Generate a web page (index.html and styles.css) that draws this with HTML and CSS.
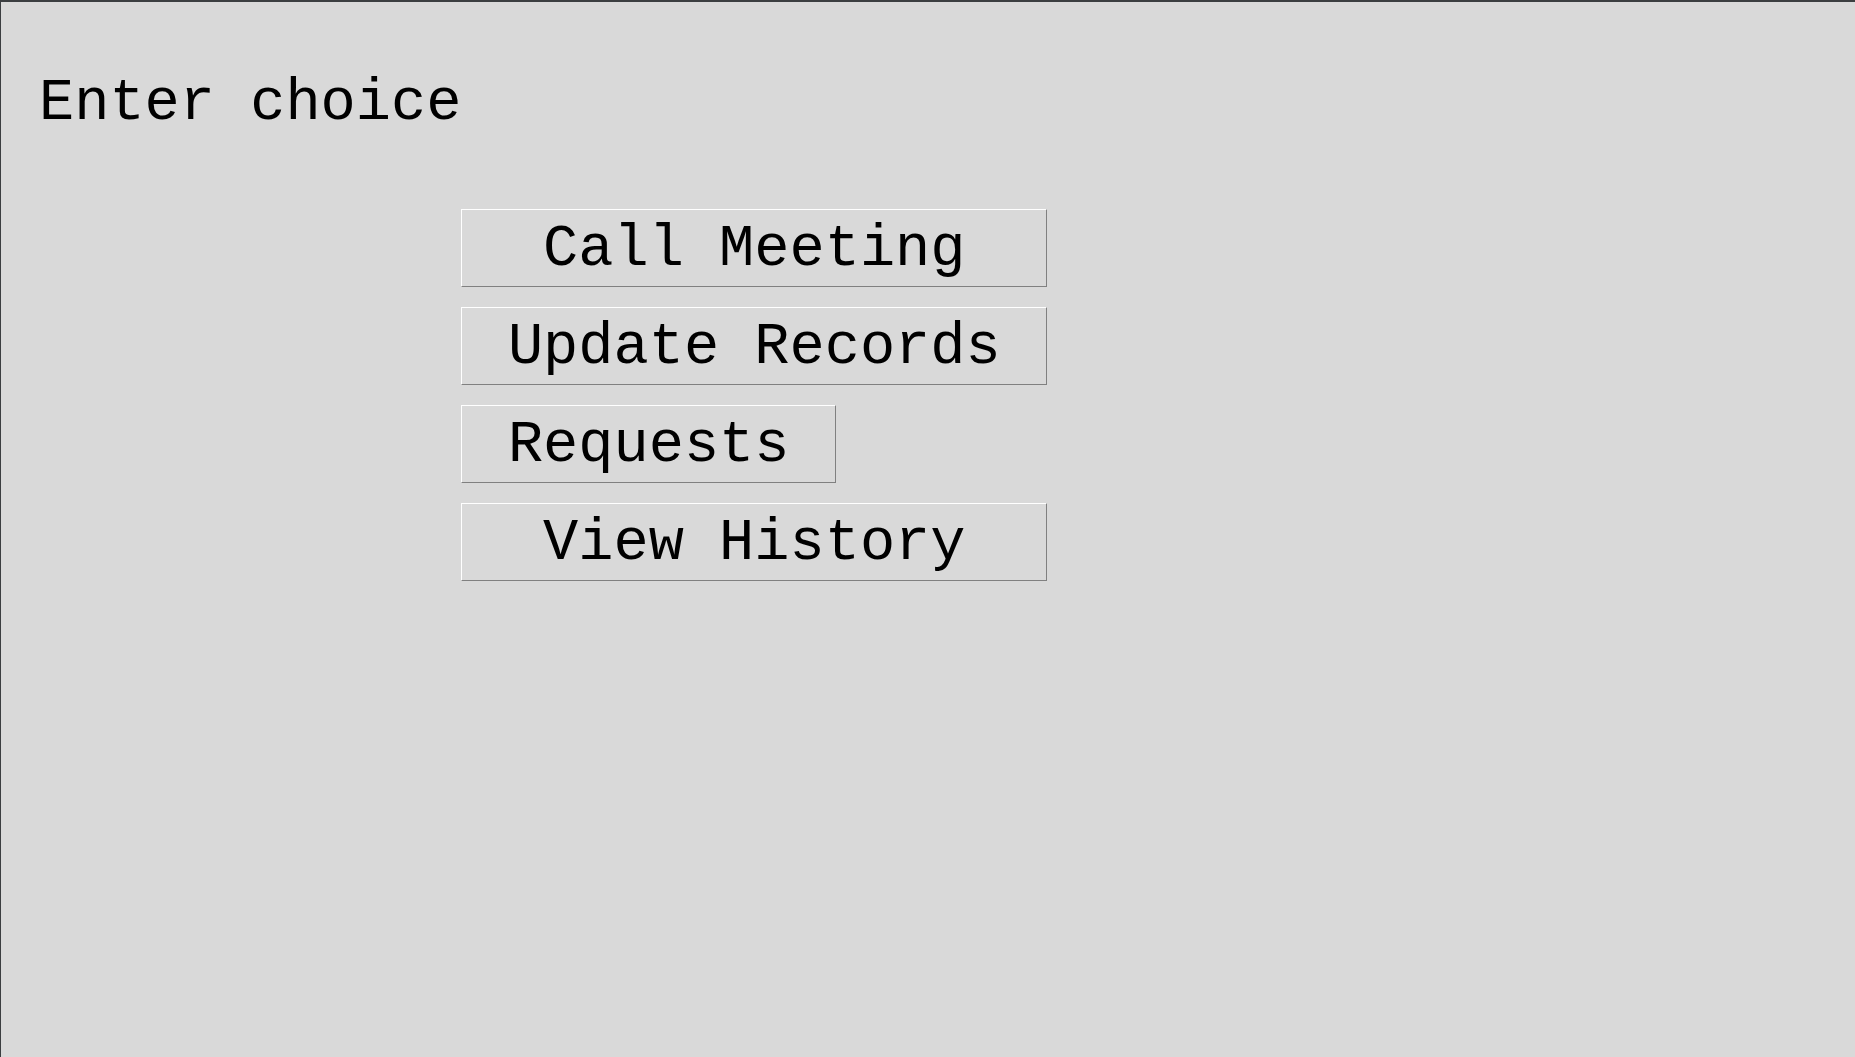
FILE: index.html
```html
<!DOCTYPE html>
<html lang="en">
<head>
<meta charset="utf-8">
<title>Enter choice</title>
<link rel="stylesheet" href="styles.css">
</head>
<body>
<div class="window">
  <div class="menu">
    <div class="prompt">Enter choice</div>
    <button class="btn wide row-1">Call Meeting</button>
    <button class="btn wide row-2">Update Records</button>
    <button class="btn row-3">Requests</button>
    <button class="btn wide row-4">View History</button>
  </div>
</div>
</body>
</html>
```
FILE: styles.css
```css
html, body {
  margin: 0;
  padding: 0;
  background: #d9d9d9;
}
body {
  height: 100vh;
  box-sizing: border-box;
  border-top: 2px solid #3b3e40;
  border-left: 1px solid #3b3e40;
  overflow: hidden;
}
.window {
  padding: 68px 0 0 38px;
}
.menu {
  display: grid;
  grid-template-columns: auto auto;
  row-gap: 20px;
  justify-content: start;
  align-items: start;
}
.prompt {
  grid-column: 1;
  grid-row: 1;
  font-family: "Courier New", "Nimbus Mono PS", "FreeMono", "Liberation Mono", monospace;
  font-size: 58.67px;
  line-height: 67px;
  color: #000;
  white-space: pre;
  margin-bottom: 52px;
}
.btn {
  grid-column: 2;
  justify-self: start;
  font-family: "Courier New", "Nimbus Mono PS", "FreeMono", "Liberation Mono", monospace;
  font-size: 58.67px;
  line-height: 67px;
  color: #000;
  background: #d9d9d9;
  margin: 0;
  padding: 6px 45.5px 3px;
  border: 1px solid;
  border-color: #ffffff #808080 #808080 #ffffff;
  border-radius: 0;
  white-space: pre;
  text-align: center;
  cursor: default;
}
.btn.wide {
  justify-self: stretch;
}
.row-1 { grid-row: 2; }
.row-2 { grid-row: 3; }
.row-3 { grid-row: 4; }
.row-4 { grid-row: 5; }
```
